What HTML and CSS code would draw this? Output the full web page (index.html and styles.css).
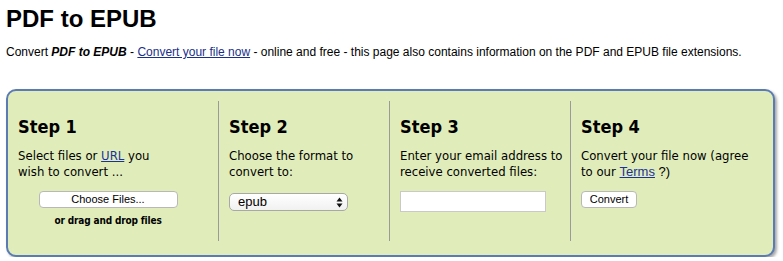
FILE: index.html
```html
<!DOCTYPE html>
<html lang="en">
<head>
<meta charset="utf-8">
<title>PDF to EPUB</title>
<link rel="stylesheet" href="styles.css">
</head>
<body>
<h1 class="title">PDF to EPUB</h1>
<p class="intro">Convert <strong><em>PDF to EPUB</em></strong> - <a href="#">Convert your file now</a> - online and free - this page also contains information on the PDF and EPUB file extensions.</p>
<div class="converter">
  <div class="step">
    <h2 class="step-title">Step 1</h2>
    <p class="step-text">Select files or <a href="#">URL</a> you<br>wish to convert ...</p>
    <div class="file-block">
      <button class="file-btn" type="button">Choose Files...</button>
      <div class="drop-hint">or drag and drop files</div>
    </div>
  </div>
  <div class="step">
    <h2 class="step-title">Step 2</h2>
    <p class="step-text">Choose the format to<br>convert to:</p>
    <div class="select-wrap">
      <select class="format-select"><option>epub</option></select>
      <svg class="select-arrows" width="7" height="11" viewBox="0 0 7 11"><path d="M3.5 0.5 L6.5 4.5 L0.5 4.5 Z M3.5 10.5 L6.5 6.5 L0.5 6.5 Z" fill="#111"/></svg>
    </div>
  </div>
  <div class="step">
    <h2 class="step-title">Step 3</h2>
    <p class="step-text">Enter your email address to<br>receive converted files:</p>
    <input class="email-input" type="text">
  </div>
  <div class="step">
    <h2 class="step-title">Step 4</h2>
    <p class="step-text">Convert your file now (agree<br>to our <a class="terms" href="#">Terms</a><span class="terms-tail"> ?)</span></p>
    <button class="convert-btn" type="button">Convert</button>
  </div>
</div>
</body>
</html>
```
FILE: styles.css
```css
body {
  margin: 0;
  padding: 5px 8px 0 6px;
  font-family: "Liberation Sans", Arial, sans-serif;
  color: #000;
  background: #fff;
}

.title {
  margin: 0;
  font-size: 24px;
  line-height: 28px;
  font-weight: bold;
}

.intro {
  margin: 11px 0 0;
  font-size: 12px;
  line-height: 16px;
}

.intro a {
  color: #1a2f8a;
}

.converter {
  margin-top: 29px;
  display: grid;
  grid-template-columns: 210px 171px 181px 1fr;
  padding: 10px 0 14px;
  background: #e0edbb;
  border: 2px solid #5b7bb5;
  border-radius: 10px;
  box-shadow: 2px 2px 3px rgba(0, 0, 0, 0.35);
}

.step {
  padding: 15px 10px 14px;
  border-left: 1px solid #9a9a9a;
  font-family: "DejaVu Sans Condensed", "DejaVu Sans", sans-serif;
  font-stretch: condensed;
}

.step:first-child {
  border-left: none;
}

.step-title {
  margin: 0;
  font-size: 18px;
  line-height: 22px;
  font-weight: bold;
}

.step-text {
  margin: 10px 0 0;
  font-size: 13px;
  line-height: 16px;
  white-space: nowrap;
}

.step-text a {
  color: #1a3399;
}

.step-text .terms,
.step-text .terms-tail {
  font-family: "Liberation Sans", Arial, sans-serif;
}

.file-block {
  width: 180px;
  margin-top: 11px;
  display: flex;
  flex-direction: column;
  align-items: center;
}

.file-btn,
.convert-btn {
  height: 17px;
  padding: 0;
  background: #fff;
  border: 1px solid #b8b8b8;
  border-radius: 4px;
  font-family: "Liberation Sans", Arial, sans-serif;
  font-size: 11px;
  line-height: 15px;
  color: #000;
}

.file-btn {
  width: 139px;
}

.drop-hint {
  margin-top: 7px;
  font-size: 10px;
  line-height: 12px;
  font-weight: bold;
  letter-spacing: -0.15px;
}

.select-wrap {
  position: relative;
  width: 119px;
  margin-top: 13px;
}

.format-select {
  display: block;
  appearance: none;
  -webkit-appearance: none;
  width: 119px;
  height: 18px;
  margin: 0;
  padding: 0 0 0 8px;
  border: 1px solid #a8a8a8;
  border-radius: 5px;
  background: linear-gradient(#ffffff, #f1f1f1);
  font-family: "Liberation Sans", Arial, sans-serif;
  font-size: 13px;
  line-height: 16px;
  color: #000;
}

.select-arrows {
  position: absolute;
  right: 5px;
  top: 4px;
  pointer-events: none;
}

.email-input {
  display: block;
  box-sizing: border-box;
  width: 146px;
  height: 21px;
  margin: 11px 0 0;
  padding: 0 3px;
  border: 1px solid #c9c9c9;
  background: #fff;
}

.convert-btn {
  display: block;
  width: 56px;
  margin-top: 11px;
}
```
